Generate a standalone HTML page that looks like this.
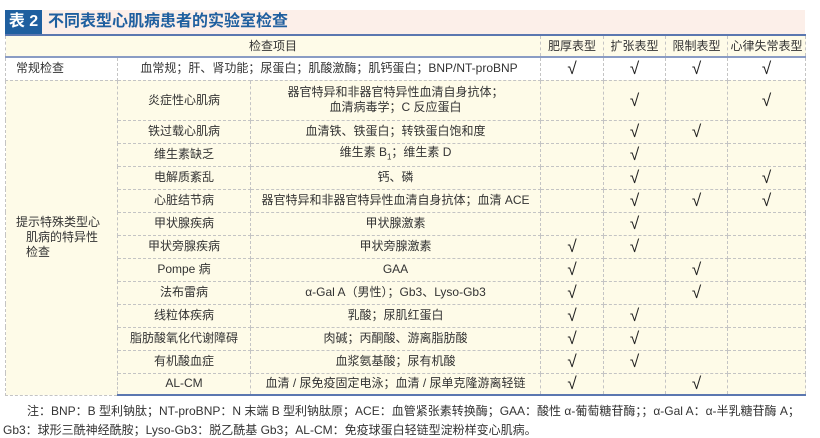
<!DOCTYPE html>
<html><head><meta charset="utf-8"><style>
body{margin:0;width:820px;height:438px;background:#fff;font-family:"Liberation Sans","Noto Sans CJK SC",sans-serif;color:#333;position:relative;overflow:hidden}
.title{position:absolute;left:5px;top:10px;width:800px;height:24px;background:#fcefe9}
.tag{position:absolute;left:0;top:0;width:37px;height:24px;background:#1f5f9f;color:#fff;font-size:16px;font-weight:bold;line-height:24px;text-align:center}
.tt{position:absolute;left:43px;top:0;line-height:24px;font-size:16px;color:#1f5f9f;font-weight:bold}
table{position:absolute;left:5px;top:34px;width:800px;border-collapse:collapse;table-layout:fixed;font-size:12px}
td{border:1px dashed #c4c4c4;text-align:center;padding:0;background:#fefbe8;line-height:15px}
tr.h td{border-top:2px solid #5b77b0;border-bottom:2px solid #8a9cc4;height:20px}
tr.w td{background:#fff}
tr.last td{border-bottom:2px solid #5b77b0}
.c{font-size:17px;line-height:15px;color:#222}
.note{position:absolute;left:0;font-size:12px;color:#333;white-space:nowrap}
</style></head><body>
<div class="title"><div class="tag">表 2</div><div class="tt">不同表型心肌病患者的实验室检查</div></div>
<table>
<colgroup><col style="width:112px"><col style="width:133px"><col style="width:290px"><col style="width:63px"><col style="width:62px"><col style="width:62px"><col style="width:78px"></colgroup>
<tr class="h"><td colspan="3">检查项目</td><td>肥厚表型</td><td>扩张表型</td><td>限制表型</td><td>心律失常表型</td></tr>
<tr class="w" style="height:23px"><td style="text-align:left;padding-left:10px">常规检查</td><td colspan="2">血常规；肝、肾功能；尿蛋白；肌酸激酶；肌钙蛋白；BNP/NT-proBNP</td><td class="c">√</td><td class="c">√</td><td class="c">√</td><td class="c">√</td></tr>
<tr style="height:40px"><td rowspan="14" style="text-align:left;padding-left:10px">提示特殊类型心<br>&nbsp;&nbsp;&nbsp;肌病的特异性<br>&nbsp;&nbsp;&nbsp;检查</td><td>炎症性心肌病</td><td>器官特异和非器官特异性血清自身抗体；<br>血清病毒学；C 反应蛋白</td><td></td><td class="c">√</td><td></td><td class="c">√</td></tr>
<tr style="height:23px"><td>铁过载心肌病</td><td>血清铁、铁蛋白；转铁蛋白饱和度</td><td></td><td class="c">√</td><td class="c">√</td><td></td></tr>
<tr style="height:23px"><td>维生素缺乏</td><td>维生素 B<sub style="font-size:8px">1</sub>；维生素 D</td><td></td><td class="c">√</td><td></td><td></td></tr>
<tr style="height:23px"><td>电解质紊乱</td><td>钙、磷</td><td></td><td class="c">√</td><td></td><td class="c">√</td></tr>
<tr style="height:23px"><td>心脏结节病</td><td>器官特异和非器官特异性血清自身抗体；血清 ACE</td><td></td><td class="c">√</td><td class="c">√</td><td class="c">√</td></tr>
<tr style="height:23px"><td>甲状腺疾病</td><td>甲状腺激素</td><td></td><td class="c">√</td><td></td><td></td></tr>
<tr style="height:23px"><td>甲状旁腺疾病</td><td>甲状旁腺激素</td><td class="c">√</td><td class="c">√</td><td></td><td></td></tr>
<tr style="height:23px"><td>Pompe 病</td><td>GAA</td><td class="c">√</td><td></td><td class="c">√</td><td></td></tr>
<tr style="height:23px"><td>法布雷病</td><td>α-Gal A（男性）；Gb3、Lyso-Gb3</td><td class="c">√</td><td></td><td class="c">√</td><td></td></tr>
<tr style="height:23px"><td>线粒体疾病</td><td>乳酸；尿肌红蛋白</td><td class="c">√</td><td class="c">√</td><td></td><td></td></tr>
<tr style="height:23px"><td>脂肪酸氧化代谢障碍</td><td>肉碱；丙酮酸、游离脂肪酸</td><td class="c">√</td><td class="c">√</td><td></td><td></td></tr>
<tr style="height:23px"><td>有机酸血症</td><td>血浆氨基酸；尿有机酸</td><td class="c">√</td><td class="c">√</td><td></td><td></td></tr>
<tr class="last" style="height:22px"><td>AL-CM</td><td>血清 / 尿免疫固定电泳；血清 / 尿单克隆游离轻链</td><td class="c">√</td><td></td><td class="c">√</td><td></td></tr>
</table>
<div class="note" style="top:402px;left:27px">注：BNP：B 型利钠肽；NT-proBNP：N 末端 B 型利钠肽原；ACE：血管紧张素转换酶；GAA：酸性 α-葡萄糖苷酶；；α-Gal A：α-半乳糖苷酶 A；</div>
<div class="note" style="top:421px;left:3px">Gb3：球形三酰神经酰胺；Lyso-Gb3：脱乙酰基 Gb3；AL-CM：免疫球蛋白轻链型淀粉样变心肌病。</div>
</body></html>
